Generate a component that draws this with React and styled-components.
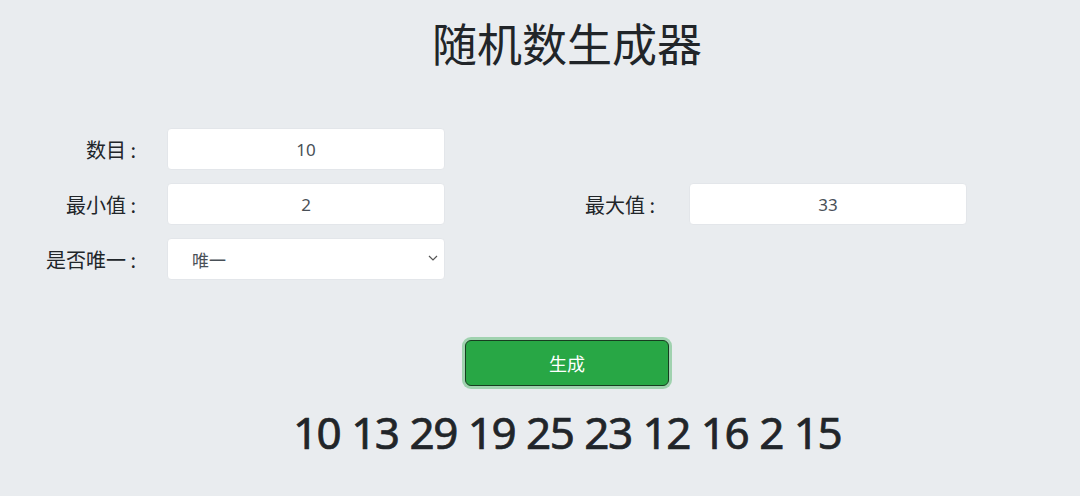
import React, { useState } from 'react';
import styled, { createGlobalStyle } from 'styled-components';

const GlobalStyle = createGlobalStyle`
  html, body {
    margin: 0;
    padding: 0;
    background: #e9ecef;
    color: #212529;
    font-family: "Noto Sans", "Noto Sans CJK SC", sans-serif;
  }
  * {
    box-sizing: border-box;
  }
`;

const Page = styled.div`
  width: 1080px;
  height: 496px;
  overflow: hidden;
`;

const Centered = styled.div`
  padding-left: 54px;
  display: flex;
  flex-direction: column;
  align-items: center;
`;

const Title = styled.h1`
  margin: 16px 0 0;
  font-family: "Noto Sans CJK SC", sans-serif;
  font-size: 45px;
  font-weight: 400;
  line-height: 54px;
  color: #212529;
`;

const Form = styled.div`
  margin-top: 58px;
  display: grid;
  grid-template-columns: 137px 278px 184px 278px;
  grid-auto-rows: 42px;
  column-gap: 30px;
  row-gap: 13px;
`;

const Label = styled.label`
  grid-column: ${(p) => p.col || 1};
  display: flex;
  align-items: center;
  justify-content: flex-end;
  padding-right: ${(p) => (p.col === 3 ? '4px' : '1px')};
  font-family: "Noto Sans CJK SC", sans-serif;
  font-size: 20px;
  color: #212529;
  white-space: nowrap;
`;

const Input = styled.input`
  grid-column: ${(p) => p.col || 2};
  width: 100%;
  height: 42px;
  border: 1px solid #e3e6ea;
  border-radius: 4px;
  background: #fff;
  text-align: center;
  font-family: "Noto Sans", "Noto Sans CJK SC", sans-serif;
  font-size: 17px;
  color: #495057;
  outline: none;
`;

const SelectWrap = styled.div`
  grid-column: 2;
  position: relative;
  height: 42px;
`;

const Select = styled.select`
  appearance: none;
  width: 100%;
  height: 100%;
  border: 1px solid #e3e6ea;
  border-radius: 4px;
  background: #fff;
  padding: 0 30px 0 24px;
  font-family: "Noto Sans CJK SC", sans-serif;
  font-size: 17px;
  color: #495057;
  outline: none;
`;

const Chevron = styled.svg`
  position: absolute;
  right: 7px;
  top: 16px;
  pointer-events: none;
`;

const Button = styled.button`
  margin-top: 60px;
  width: 204px;
  height: 46px;
  border: 1px solid #173d20;
  border-radius: 6px;
  background: #28a745;
  box-shadow: 0 0 0 3px rgba(72, 180, 97, 0.45);
  color: #fff;
  font-family: "Noto Sans CJK SC", sans-serif;
  font-size: 18px;
  cursor: pointer;
`;

const Result = styled.div`
  margin-top: 20px;
  font-family: "Noto Sans", sans-serif;
  font-size: 44px;
  font-weight: 400;
  line-height: 53px;
  letter-spacing: -1.5px;
  word-spacing: 1px;
  -webkit-text-stroke: 0.7px #212529;
  color: #212529;
`;

export default function App() {
  const [count, setCount] = useState('10');
  const [min, setMin] = useState('2');
  const [max, setMax] = useState('33');
  const [unique, setUnique] = useState('唯一');
  const [nums] = useState([10, 13, 29, 19, 25, 23, 12, 16, 2, 15]);

  return (
    <Page>
      <GlobalStyle />
      <Centered>
        <Title>随机数生成器</Title>
      </Centered>
      <Form>
        <Label>数目 :</Label>
        <Input value={count} onChange={(e) => setCount(e.target.value)} />

        <Label>最小值 :</Label>
        <Input value={min} onChange={(e) => setMin(e.target.value)} />
        <Label col={3}>最大值 :</Label>
        <Input col={4} value={max} onChange={(e) => setMax(e.target.value)} />

        <Label>是否唯一 :</Label>
        <SelectWrap>
          <Select value={unique} onChange={(e) => setUnique(e.target.value)}>
            <option>唯一</option>
            <option>不唯一</option>
          </Select>
          <Chevron width="10" height="8" viewBox="0 0 10 8">
            <path d="M1 2 L5 6 L9 2" fill="none" stroke="#555" strokeWidth="1.2" />
          </Chevron>
        </SelectWrap>
      </Form>
      <Centered>
        <Button>生成</Button>
        <Result>{nums.join(' ')}</Result>
      </Centered>
    </Page>
  );
}
